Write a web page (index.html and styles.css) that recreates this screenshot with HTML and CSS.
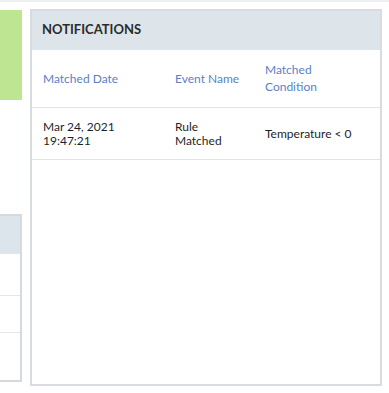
FILE: index.html
```html
<!DOCTYPE html>
<html lang="en">
<head>
  <meta charset="UTF-8">
  <title>Notifications</title>
  <link rel="stylesheet" href="styles.css">
</head>
<body>
  <div class="topbar"></div>
  <div class="layout">
    <div class="side">
      <div class="status"></div>
      <table class="mini">
        <thead>
          <tr><th></th></tr>
        </thead>
        <tbody>
          <tr class="r1"><td></td></tr>
          <tr class="r2"><td></td></tr>
          <tr class="r3"><td></td></tr>
        </tbody>
      </table>
    </div>

    <div class="panel">
      <h2>NOTIFICATIONS</h2>
      <table class="notes">
        <thead>
          <tr>
            <th class="c1">Matched Date</th>
            <th class="c2">Event Name</th>
            <th class="c3">Matched<br>Condition</th>
          </tr>
        </thead>
        <tbody>
          <!-- one rule hit so far -->
          <tr>
            <td>Mar 24, 2021<br>19:47:21</td>
            <td>Rule<br>Matched</td>
            <td>Temperature &lt; 0</td>
          </tr>
        </tbody>
      </table>
    </div>
  </div>
</body>
</html>
```

FILE: styles.css
```css
body {
  margin: 0;
  font-family: Lato, "Open Sans", Arial, sans-serif;
  background: #fff;
  width: 389px;
  height: 393px;
  overflow: hidden;
}

.topbar {
  height: 2px;
  background: #eef0f2;
}

.layout {
  display: flex;
  align-items: flex-start;
}

.side {
  width: 22px;
  display: flex;
  flex-direction: column;
}

.status {
  margin-top: 8px;
  height: 90px;
  background: #bde592;
}

.mini {
  margin-top: 114px;
  width: 22px;
  border-collapse: collapse;
  border-right: 2px solid #d6dade;
  border-bottom: 2px solid #d6dade;
  border-top: 2px solid #d6dade;
}

.mini th {
  height: 37px;
  padding: 0;
  background: #dde5ec;
}

.mini td {
  padding: 0;
  border-top: 1px solid #e4e6e9;
}

.mini .r1 td { height: 41px; }
.mini .r2 td { height: 36px; }
.mini .r3 td { height: 47px; }

.panel {
  margin: 7px 0 0 8px;
  width: 348px;
  height: 373px;
  border: 2px solid #d8dce0;
  background: #fff;
}

h2 {
  margin: 0;
  height: 39px;
  line-height: 37px;
  padding-left: 10px;
  background: #dde5eb;
  color: #2b2b2b;
  font-size: 13px;
  font-weight: 700;
}

.notes {
  width: 100%;
  border-collapse: collapse;
}

.notes th {
  height: 56px;
  padding: 0 0 1px 11px;
  text-align: left;
  font-weight: 400;
  font-size: 12px;
  line-height: 17px;
  color: #5a7fc8;
  border-bottom: 1px solid #e1e4e7;
}

.notes td {
  height: 51px;
  padding: 0 0 0 11px;
  font-size: 12px;
  line-height: 14px;
  color: #1f1f1f;
  border-bottom: 1px solid #e1e4e7;
}

.notes .c1 { width: 121px; }
.notes .c2 { width: 79px; }
```
